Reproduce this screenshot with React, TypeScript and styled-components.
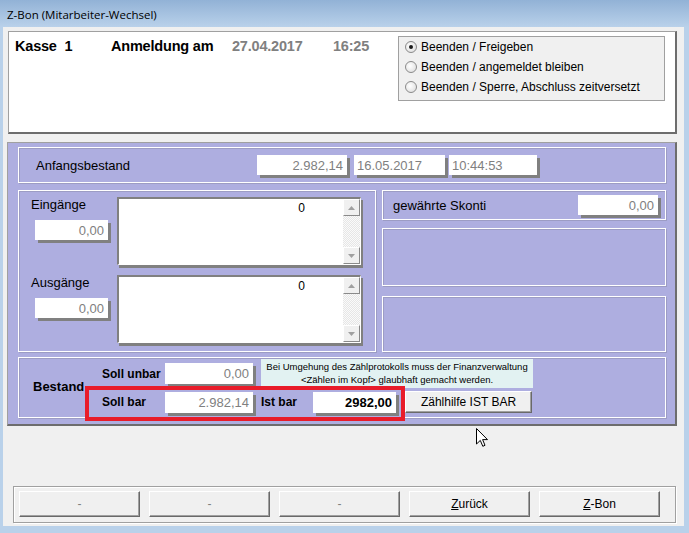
import styled, { createGlobalStyle } from 'styled-components'

const FONT = '"Liberation Sans", Arial, sans-serif'

const GlobalStyle = createGlobalStyle`
  body {
    margin: 0;
    background: #b9d1ea;
    font-family: ${FONT};
  }
`

const Window = styled.div`
  width: 689px;
  height: 533px;
  display: flex;
  flex-direction: column;
  background: #b9d1ea;
  overflow: hidden;
`

const TitleBar = styled.div`
  height: 27px;
  flex-shrink: 0;
  display: flex;
  align-items: center;
  padding: 2px 0 0 7px;
  box-sizing: border-box;
  background: linear-gradient(#92b2d6, #b9d1ea);
  font-family: "Open Sans", "Noto Sans", sans-serif;
  font-size: 11.5px;
  color: #000;
`

const Client = styled.div`
  position: relative;
  flex: 1;
  margin: 0 5px 7px 3px;
  background: #f0f0f0;
  display: flex;
  flex-direction: column;
`

const TopPanel = styled.div`
  margin: 4px 0 0 5px;
  width: 669px;
  height: 103px;
  box-sizing: border-box;
  background: #fff;
  border-style: solid;
  border-width: 1px 2px 2px 1px;
  border-color: #a0a0a0 #6d6d6d #6d6d6d #a0a0a0;
  display: flex;
  align-items: flex-start;
`

const Header = styled.div`
  display: flex;
  padding: 6px 0 0 6px;
  line-height: 16px;
`

const HeaderItem = styled.span<{ $w: number; $muted?: boolean }>`
  width: ${p => p.$w}px;
  flex-shrink: 0;
  font-size: 14.5px;
  font-weight: bold;
  letter-spacing: -0.2px;
  white-space: pre;
  color: ${p => (p.$muted ? '#808080' : '#000')};
`

const RadioGroup = styled.div`
  margin: 4px 10px 0 auto;
  width: 267px;
  height: 65px;
  box-sizing: border-box;
  background: #f0f0f0;
  border: 1px solid #a0a0a0;
  padding: 0 0 0 6px;
`

const RadioRow = styled.div`
  height: 20px;
  display: flex;
  align-items: center;
  gap: 4px;
  font-size: 12px;
`

const RadioDot = styled.span<{ $checked?: boolean }>`
  width: 12px;
  height: 12px;
  border-radius: 50%;
  box-sizing: border-box;
  border: 1px solid #8a8a8a;
  background: radial-gradient(circle at 40% 40%, #fff 0, #e4e4e4 70%);
  display: flex;
  align-items: center;
  justify-content: center;
  &::after {
    content: '';
    width: 4px;
    height: 4px;
    border-radius: 50%;
    background: ${p => (p.$checked ? '#1a1a1a' : 'transparent')};
  }
`

const MainPanel = styled.div`
  margin: 8px 0 0 4px;
  width: 670px;
  height: 284px;
  box-sizing: border-box;
  background: #aeaee0;
  border-style: solid;
  border-width: 1px 2px 2px 1px;
  border-color: #a0a0a0 #6d6d6d #6d6d6d #a0a0a0;
  padding: 4px 9px 0 10px;
  display: flex;
  flex-direction: column;
`

const Group = styled.div`
  box-sizing: border-box;
  border: 1px solid #fff;
  box-shadow: inset 1px 1px 0 #9c9cc4, 1px 1px 0 #9c9cc4;
`

const AnfangGroup = styled(Group)`
  height: 36px;
  display: flex;
  align-items: center;
  padding-left: 17px;
  gap: 7px;
`

const Label = styled.span<{ $w?: number; $bold?: boolean }>`
  ${p => (p.$w ? `width: ${p.$w}px; flex-shrink: 0;` : '')}
  font-size: ${p => (p.$bold ? '12px' : '13px')};
  font-weight: ${p => (p.$bold ? 'bold' : 'normal')};
  color: #000;
  white-space: nowrap;
`

const Field = styled.div<{ $w: number; $h?: number; $left?: boolean; $strong?: boolean }>`
  width: ${p => p.$w}px;
  height: ${p => p.$h ?? 20}px;
  flex-shrink: 0;
  box-sizing: border-box;
  background: #fff;
  box-shadow: 3px 3px 0 #808080;
  display: flex;
  align-items: center;
  justify-content: ${p => (p.$left ? 'flex-start' : 'flex-end')};
  padding: 0 4px 0 3px;
  font-size: 13px;
  font-weight: ${p => (p.$strong ? 'bold' : 'normal')};
  color: ${p => (p.$strong ? '#000' : '#808080')};
`

const MiddleRow = styled.div`
  margin-top: 7px;
  height: 162px;
  display: flex;
  gap: 6px;
`

const LeftGroup = styled(Group)`
  width: 358px;
  padding: 6px 0 0;
  display: flex;
  flex-direction: column;
  gap: 10px;
`

const EntryRow = styled.div`
  display: flex;
  height: 68px;
`

const EntryLabels = styled.div`
  width: 98px;
  display: flex;
  flex-direction: column;
  padding: 0 0 0 12px;
  box-sizing: border-box;
  gap: 8px;
  & > div {
    margin-left: 4px;
  }
`

const ListBox = styled.div`
  width: 244px;
  height: 68px;
  box-sizing: border-box;
  background: #fff;
  border-style: solid;
  border-width: 2px 1px 1px 2px;
  border-color: #808080 #fff #fff #808080;
  box-shadow: 2px 3px 0 #808080;
  display: flex;
`

const ListContent = styled.div`
  flex: 1;
  text-align: right;
  padding: 2px 38px 0 0;
  font-size: 12px;
  line-height: 14px;
`

const ScrollBar = styled.div`
  width: 17px;
  display: flex;
  flex-direction: column;
  justify-content: space-between;
  background: repeating-conic-gradient(#e6e6e6 0 25%, #fafafa 0 50%) 0 0 / 2px 2px;
`

const ScrollButton = styled.div`
  height: 17px;
  box-sizing: border-box;
  background: #f0f0f0;
  border-style: solid;
  border-width: 1px;
  border-color: #fff #8a8a8a #8a8a8a #fff;
  display: flex;
  align-items: center;
  justify-content: center;
`

const RightCol = styled.div`
  flex: 1;
  display: flex;
  flex-direction: column;
`

const SkontiGroup = styled(Group)`
  height: 30px;
  display: flex;
  align-items: center;
  justify-content: space-between;
  padding: 0 7px 0 10px;
`

const EmptyGroup = styled(Group)<{ $h?: number }>`
  margin-top: ${p => (p.$h ? 8 : 10)}px;
  ${p => (p.$h ? `height: ${p.$h}px;` : 'flex: 1;')}
`

const BestandGroup = styled(Group)`
  position: relative;
  margin-top: 5px;
  height: 61px;
  padding-top: 1px;
  display: grid;
  grid-template-columns: 83px 63px 96px 272px;
  grid-template-rows: 29px 22px;
  row-gap: 3px;
  align-items: center;
`

const BestandLabel = styled.span`
  grid-row: 1 / span 2;
  padding: 0 0 0 14px;
  font-size: 13px;
  font-weight: bold;
`

const InfoBox = styled.div`
  height: 29px;
  background: #e2f2f2;
  font-size: 9.5px;
  line-height: 13px;
  text-align: center;
  padding-top: 1px;
  box-sizing: border-box;
`

const IstRow = styled.div`
  display: flex;
  align-items: center;
  height: 22px;
`

const WinButton = styled.button<{ $w?: number; $muted?: boolean }>`
  ${p => (p.$w ? `width: ${p.$w}px;` : 'flex: 1;')}
  height: ${p => (p.$w ? 22 : 26)}px;
  box-sizing: border-box;
  margin: 0;
  padding: 0;
  background: #f0f0f0;
  border-style: solid;
  border-width: 1px;
  border-color: #fff #696969 #696969 #fff;
  box-shadow: inset -1px -1px 0 #a0a0a0;
  font-family: ${FONT};
  font-size: 12px;
  color: ${p => (p.$muted ? '#808080' : '#000')};
  & u {
    text-decoration: underline;
  }
`

const RedMark = styled.div`
  position: absolute;
  left: 66px;
  top: 28px;
  width: 320px;
  height: 35px;
  box-sizing: border-box;
  border: 4px solid #e81c2a;
  pointer-events: none;
`

const ButtonGroup = styled.div`
  margin: 60px 0 0 10px;
  width: 663px;
  height: 37px;
  box-sizing: border-box;
  border: 1px solid #a0a0a0;
  box-shadow: inset 1px 1px 0 #fff, 1px 1px 0 #fff;
  padding: 4px 15px 0 5px;
  display: flex;
  gap: 9px;
`

const Cursor = styled.svg`
  position: absolute;
  left: 473px;
  top: 401px;
`

const UpArrow = () => (
  <svg width="7" height="4" viewBox="0 0 7 4">
    <path d="M0 4 L3.5 0 L7 4 Z" fill="#a0a0a0" />
  </svg>
)

const DownArrow = () => (
  <svg width="7" height="4" viewBox="0 0 7 4">
    <path d="M0 0 L3.5 4 L7 0 Z" fill="#a0a0a0" />
  </svg>
)

const Entry = ({ label }: { label: string }) => (
  <EntryRow>
    <EntryLabels>
      <Label>{label}</Label>
      <Field $w={73}>0,00</Field>
    </EntryLabels>
    <ListBox>
      <ListContent>0</ListContent>
      <ScrollBar>
        <ScrollButton><UpArrow /></ScrollButton>
        <ScrollButton><DownArrow /></ScrollButton>
      </ScrollBar>
    </ListBox>
  </EntryRow>
)

const radios = [
  'Beenden / Freigeben',
  'Beenden / angemeldet bleiben',
  'Beenden / Sperre, Abschluss zeitversetzt'
]

export default function App() {
  return (
    <>
      <GlobalStyle />
      <Window>
        <TitleBar>Z-Bon (Mitarbeiter-Wechsel)</TitleBar>
        <Client>
          <TopPanel>
            <Header>
              <HeaderItem $w={96}>{'Kasse  1'}</HeaderItem>
              <HeaderItem $w={121}>Anmeldung am</HeaderItem>
              <HeaderItem $w={101} $muted>27.04.2017</HeaderItem>
              <HeaderItem $w={40} $muted>16:25</HeaderItem>
            </Header>
            <RadioGroup>
              {radios.map((r, i) => (
                <RadioRow key={r}>
                  <RadioDot $checked={i === 0} />
                  {r}
                </RadioRow>
              ))}
            </RadioGroup>
          </TopPanel>

          <MainPanel>
            <AnfangGroup>
              <Label $w={214}>Anfangsbestand</Label>
              <Field $w={90}>2.982,14</Field>
              <Field $w={91} $left>16.05.2017</Field>
              <Field $w={88} $left style={{ marginLeft: -3 }}>10:44:53</Field>
            </AnfangGroup>

            <MiddleRow>
              <LeftGroup>
                <Entry label="Eingänge" />
                <Entry label="Ausgänge" />
              </LeftGroup>
              <RightCol>
                <SkontiGroup>
                  <Label>gewährte Skonti</Label>
                  <Field $w={80}>0,00</Field>
                </SkontiGroup>
                <EmptyGroup $h={58} />
                <EmptyGroup />
              </RightCol>
            </MiddleRow>

            <BestandGroup>
              <BestandLabel>Bestand</BestandLabel>
              <Label $bold>Soll unbar</Label>
              <Field $w={88} $h={21}>0,00</Field>
              <InfoBox>
                Bei Umgehung des Zählprotokolls muss der Finanzverwaltung
                <br />
                {'<Zählen im Kopf> glaubhaft gemacht werden.'}
              </InfoBox>
              <Label $bold>Soll bar</Label>
              <Field $w={88} $h={21}>2.982,14</Field>
              <IstRow>
                <Label $bold $w={52}>Ist bar</Label>
                <Field $w={83} $h={21} $strong>2982,00</Field>
                <WinButton $w={127} style={{ marginLeft: 9 }}>Zählhilfe IST BAR</WinButton>
              </IstRow>
              <RedMark />
            </BestandGroup>
          </MainPanel>

          <ButtonGroup>
            <WinButton $muted>-</WinButton>
            <WinButton $muted>-</WinButton>
            <WinButton $muted>-</WinButton>
            <WinButton><u>Z</u>urück</WinButton>
            <WinButton><u>Z</u>-Bon</WinButton>
          </ButtonGroup>

          <Cursor width="12" height="20" viewBox="0 0 12 20">
            <path d="M0.5 0.5 L0.5 16 L4.3 12.4 L6.8 18.3 L9 17.3 L6.6 11.6 L11.5 11.6 Z" fill="#fff" stroke="#000" strokeWidth="1" />
          </Cursor>
        </Client>
      </Window>
    </>
  )
}
